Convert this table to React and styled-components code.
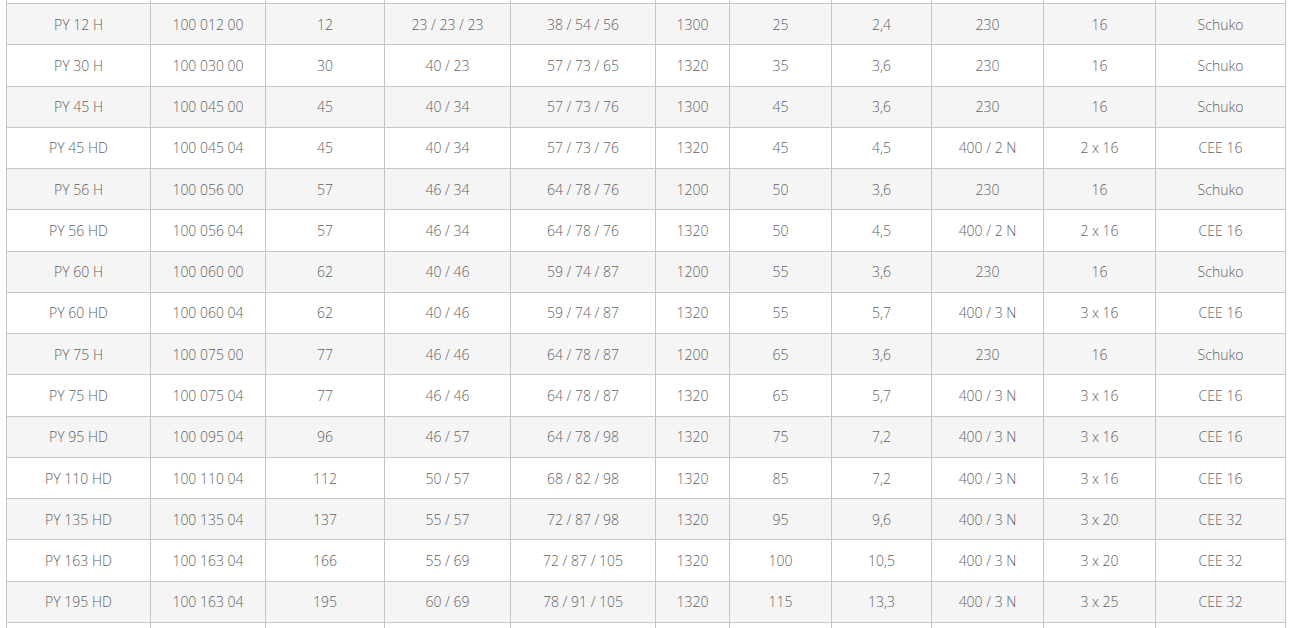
import styled, { createGlobalStyle } from 'styled-components';

const GlobalStyle = createGlobalStyle`
  html, body {
    margin: 0;
    padding: 0;
    background: #fff;
  }
`;

const Viewport = styled.div`
  height: 628px;
  overflow: hidden;
  padding: 0 6px;
`;

const Table = styled.table`
  width: 1280px;
  table-layout: fixed;
  border-collapse: collapse;
  margin-top: -38.27px;
  font-family: 'Open Sans', 'Liberation Sans', sans-serif;
  font-size: 14px;
  font-weight: 300;
  color: #626262;
`;

const Row = styled.tr`
  height: 41.27px;
  background: ${({ $shade }) => ($shade ? '#f5f5f5' : '#fff')};
`;

const Cell = styled.td`
  border: 1px solid #c6c6c6;
  text-align: center;
  vertical-align: middle;
  padding: 0 6px;
  white-space: nowrap;
`;

const widths = [144, 115, 119, 126, 145, 74, 102, 100, 112, 112, 130];

const rows = [
  ['', '', '', '', '', '', '', '', '', '', ''],
  ['PY 12 H', '100 012 00', '12', '23 / 23 / 23', '38 / 54 / 56', '1300', '25', '2,4', '230', '16', 'Schuko'],
  ['PY 30 H', '100 030 00', '30', '40 / 23', '57 / 73 / 65', '1320', '35', '3,6', '230', '16', 'Schuko'],
  ['PY 45 H', '100 045 00', '45', '40 / 34', '57 / 73 / 76', '1300', '45', '3,6', '230', '16', 'Schuko'],
  ['PY 45 HD', '100 045 04', '45', '40 / 34', '57 / 73 / 76', '1320', '45', '4,5', '400 / 2 N', '2 x 16', 'CEE 16'],
  ['PY 56 H', '100 056 00', '57', '46 / 34', '64 / 78 / 76', '1200', '50', '3,6', '230', '16', 'Schuko'],
  ['PY 56 HD', '100 056 04', '57', '46 / 34', '64 / 78 / 76', '1320', '50', '4,5', '400 / 2 N', '2 x 16', 'CEE 16'],
  ['PY 60 H', '100 060 00', '62', '40 / 46', '59 / 74 / 87', '1200', '55', '3,6', '230', '16', 'Schuko'],
  ['PY 60 HD', '100 060 04', '62', '40 / 46', '59 / 74 / 87', '1320', '55', '5,7', '400 / 3 N', '3 x 16', 'CEE 16'],
  ['PY 75 H', '100 075 00', '77', '46 / 46', '64 / 78 / 87', '1200', '65', '3,6', '230', '16', 'Schuko'],
  ['PY 75 HD', '100 075 04', '77', '46 / 46', '64 / 78 / 87', '1320', '65', '5,7', '400 / 3 N', '3 x 16', 'CEE 16'],
  ['PY 95 HD', '100 095 04', '96', '46 / 57', '64 / 78 / 98', '1320', '75', '7,2', '400 / 3 N', '3 x 16', 'CEE 16'],
  ['PY 110 HD', '100 110 04', '112', '50 / 57', '68 / 82 / 98', '1320', '85', '7,2', '400 / 3 N', '3 x 16', 'CEE 16'],
  ['PY 135 HD', '100 135 04', '137', '55 / 57', '72 / 87 / 98', '1320', '95', '9,6', '400 / 3 N', '3 x 20', 'CEE 32'],
  ['PY 163 HD', '100 163 04', '166', '55 / 69', '72 / 87 / 105', '1320', '100', '10,5', '400 / 3 N', '3 x 20', 'CEE 32'],
  ['PY 195 HD', '100 163 04', '195', '60 / 69', '78 / 91 / 105', '1320', '115', '13,3', '400 / 3 N', '3 x 25', 'CEE 32'],
  ['', '', '', '', '', '', '', '', '', '', ''],
];

export default function App() {
  return (
    <>
      <GlobalStyle />
      <Viewport>
        <Table>
          <colgroup>
            {widths.map((w, i) => (
              <col key={i} style={{ width: w }} />
            ))}
          </colgroup>
          <tbody>
            {rows.map((r, i) => (
              <Row key={i} $shade={i % 2 === 1}>
                {r.map((c, j) => (
                  <Cell key={j}>{c}</Cell>
                ))}
              </Row>
            ))}
          </tbody>
        </Table>
      </Viewport>
    </>
  );
}
